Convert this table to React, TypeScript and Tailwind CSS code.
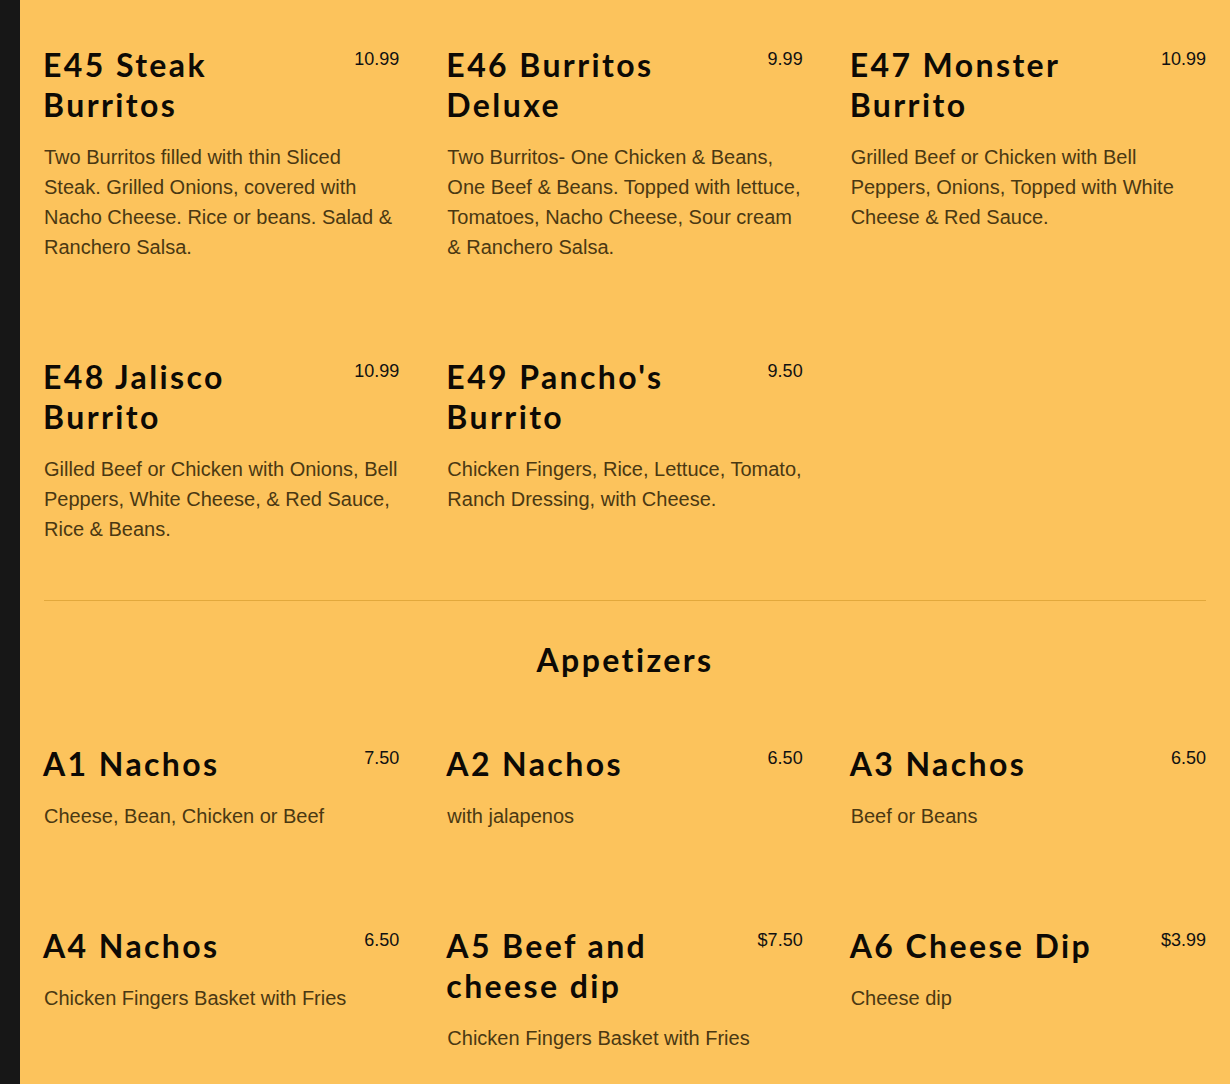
import React from "react";

type Item = { name: string; price: string; desc: string };

const entrees: Item[] = [
  {
    name: "E45 Steak Burritos",
    price: "10.99",
    desc: "Two Burritos filled with thin Sliced Steak. Grilled Onions, covered with Nacho Cheese. Rice or beans. Salad & Ranchero Salsa.",
  },
  {
    name: "E46 Burritos Deluxe",
    price: "9.99",
    desc: "Two Burritos- One Chicken & Beans, One Beef & Beans. Topped with lettuce, Tomatoes, Nacho Cheese, Sour cream & Ranchero Salsa.",
  },
  {
    name: "E47 Monster Burrito",
    price: "10.99",
    desc: "Grilled Beef or Chicken with Bell Peppers, Onions, Topped with White Cheese & Red Sauce.",
  },
  {
    name: "E48 Jalisco Burrito",
    price: "10.99",
    desc: "Gilled Beef or Chicken with Onions, Bell Peppers, White Cheese, & Red Sauce, Rice & Beans.",
  },
  {
    name: "E49 Pancho's Burrito",
    price: "9.50",
    desc: "Chicken Fingers, Rice, Lettuce, Tomato, Ranch Dressing, with Cheese.",
  },
];

const appetizers: Item[] = [
  { name: "A1 Nachos", price: "7.50", desc: "Cheese, Bean, Chicken or Beef" },
  { name: "A2 Nachos", price: "6.50", desc: "with jalapenos" },
  { name: "A3 Nachos", price: "6.50", desc: "Beef or Beans" },
  { name: "A4 Nachos", price: "6.50", desc: "Chicken Fingers Basket with Fries" },
  { name: "A5 Beef and cheese dip", price: "$7.50", desc: "Chicken Fingers Basket with Fries" },
  { name: "A6 Cheese Dip", price: "$3.99", desc: "Cheese dip" },
];

const headFont = { fontFamily: "Lato, 'Open Sans', sans-serif" };

function MenuItem({ item }: { item: Item }) {
  return (
    <div>
      <div className="flex items-start justify-between gap-4">
        <h3
          className="-ml-px max-w-[300px] text-[32px] font-bold leading-[40px] tracking-[0.075em] text-[#0d0a05]"
          style={headFont}
        >
          {item.name}
        </h3>
        <span className="shrink-0 pt-[3px] font-['Liberation_Sans',Arial,sans-serif] text-[18px] leading-[22px] text-[#111]">
          {item.price}
        </span>
      </div>
      <p className="mt-[17px] font-['Liberation_Sans',Arial,sans-serif] text-[20px] leading-[30px] text-[#4a3812]">
        {item.desc}
      </p>
    </div>
  );
}

export default function App() {
  return (
    <div className="flex min-h-[1084px] bg-[#fcc35c]">
      <div className="w-[20px] shrink-0 bg-[#171717]" />
      <main className="flex-1 px-[24px] pt-[45px]">
        {/* Burritos */}
        <section className="grid grid-cols-3 gap-x-[48px] gap-y-[95px] pb-[56px]">
          {entrees.map((item) => (
            <MenuItem key={item.name} item={item} />
          ))}
        </section>

        <hr className="border-t border-[#e2a83c]" />

        {/* Appetizers */}
        <h2
          className="mt-[39px] text-center text-[32px] font-bold leading-[40px] tracking-[0.075em] text-[#0d0a05]"
          style={headFont}
        >
          Appetizers
        </h2>
        <section className="mt-[64px] grid grid-cols-3 gap-x-[48px] gap-y-[95px] pb-[56px]">
          {appetizers.map((item) => (
            <MenuItem key={item.name} item={item} />
          ))}
        </section>
      </main>
    </div>
  );
}
